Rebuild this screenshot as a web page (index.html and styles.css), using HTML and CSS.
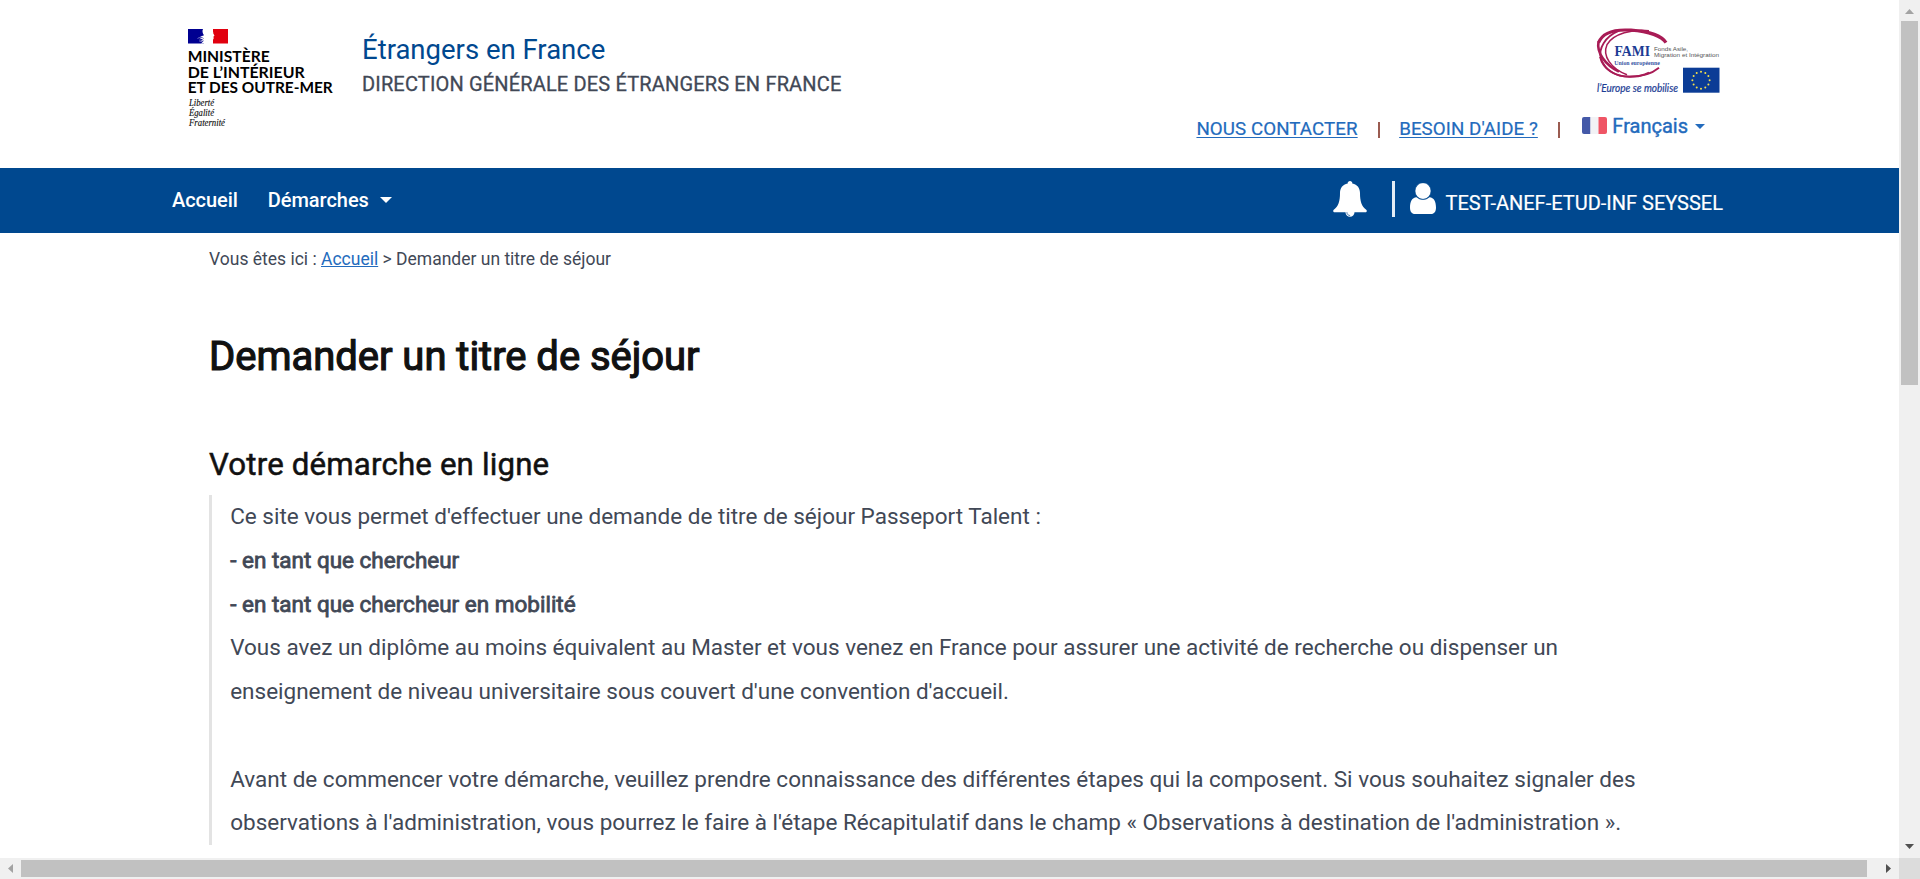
FILE: index.html
```
<!DOCTYPE html>
<html lang="fr">
<head>
<meta charset="utf-8">
<title>Étrangers en France - Demander un titre de séjour</title>
<link rel="stylesheet" href="styles.css">
</head>
<body>
<div class="window">
  <div class="page">
    <header class="header">
      <svg class="ministry" width="150" height="104" viewBox="0 0 150 104" role="img" aria-label="Ministère de l'Intérieur et des Outre-Mer">
        <rect x="0" y="1" width="16" height="14.5" fill="#000091"/>
        <rect x="25" y="1" width="15" height="14.5" fill="#e1000f"/>
        <path d="M15 1h8.500c1.200 1 1.800 2.500 1.800 4.500l1.200 2.300-1 .7.200 2-1 1.700-2.500.3-.5 3H13l3-3-4 1.500 3-3-4 .2 4-2-3-.4 4-1.500C14.500 5 14 3 15 1z" fill="#fff"/>
        <path d="M9.500 10.500c2-1.600 4.500-1.200 6.500.2M11 13c2-.2 3 .3 4.500-.6" fill="none" stroke="#8b8bc8" stroke-width=".8"/>
        <g class="ministry-name">
          <text x="-.3" y="33.800" textLength="82" lengthAdjust="spacingAndGlyphs">MINISTÈRE</text>
          <text x="-.3" y="49.600" textLength="117" lengthAdjust="spacingAndGlyphs">DE L’INTÉRIEUR</text>
          <text x="-.3" y="65" textLength="145" lengthAdjust="spacingAndGlyphs">ET DES OUTRE-MER</text>
        </g>
        <g class="motto">
          <text x="1" y="78.300" textLength="25" lengthAdjust="spacingAndGlyphs">Liberté</text>
          <text x="1" y="88.300" textLength="25" lengthAdjust="spacingAndGlyphs">Égalité</text>
          <text x="1" y="98" textLength="36" lengthAdjust="spacingAndGlyphs">Fraternité</text>
        </g>
      </svg>
      <div class="brand">
        <div class="brand-title">Étrangers en France</div>
        <div class="brand-sub">DIRECTION GÉNÉRALE DES ÉTRANGERS EN FRANCE</div>
      </div>
      <div class="header-side">
        <svg class="fami" width="126" height="70" viewBox="0 -.7 126 70" role="img" aria-label="FAMI">
          <g fill="none" stroke="#a81b55">
            <path d="M1.500 14C6 3 20 .5 34 1.500c18 1.200 31 6 35 12.500" stroke-width="3.200"/>
            <path d="M1.500 13C-.5 24 8 36 22 43" stroke-width="2.600"/>
            <path d="M22 2C8 8 1 20 4 30c4 12 16 18 28 18 13 0 24-4 30-9" stroke-width="1.800"/>
            <path d="M52 2C36 0 16 5 10 16c-5 11 4 24 20 30" stroke-width="1.500"/>
            <path d="M3 28c3 12 14 20 30 20 8 0 14-1.500 19-4" stroke-width="1.900"/>
          </g>
          <text class="fami-name" x="17.500" y="27.700" textLength="35.500" lengthAdjust="spacingAndGlyphs">FAMI</text>
          <text class="fami-union" x="17.300" y="36.800" textLength="45.500" lengthAdjust="spacingAndGlyphs">Union européenne</text>
          <text class="fami-fund" x="57" y="22" textLength="34" lengthAdjust="spacingAndGlyphs">Fonds Asile,</text>
          <text class="fami-fund" x="57" y="28.300" textLength="65" lengthAdjust="spacingAndGlyphs">Migration et Intégration</text>
          <text class="fami-slogan" x="0" y="63" textLength="81" lengthAdjust="spacingAndGlyphs">l’Europe se mobilise</text>
          <rect x="86" y="39" width="36.500" height="25" fill="#0b3c96"/>
          <g fill="#f5e04a">
            <circle cx="104" cy="43" r="1"/><circle cx="108.300" cy="44.200" r="1"/><circle cx="111.400" cy="47.300" r="1"/><circle cx="112.600" cy="51.500" r="1"/><circle cx="111.400" cy="55.700" r="1"/><circle cx="108.300" cy="58.800" r="1"/><circle cx="104" cy="60" r="1"/><circle cx="99.700" cy="58.800" r="1"/><circle cx="96.600" cy="55.700" r="1"/><circle cx="95.400" cy="51.500" r="1"/><circle cx="96.600" cy="47.300" r="1"/><circle cx="99.700" cy="44.200" r="1"/>
          </g>
        </svg>
        <div class="links">
          <a class="link">NOUS CONTACTER</a>
          <span class="bar"></span>
          <a class="link">BESOIN D'AIDE ?</a>
          <span class="bar"></span>
          <span class="lang">
            <svg width="25" height="17" viewBox="0 0 25 17"><path d="M2 0h6.500v17H2a2 2 0 0 1-2-2V2a2 2 0 0 1 2-2z" fill="#4459a8"/><path d="M8.500 0h8v17h-8z" fill="#f2f2f5"/><path d="M16.500 0H23a2 2 0 0 1 2 2v13a2 2 0 0 1-2 2h-6.500z" fill="#ef5565"/></svg>
            <span class="lang-name">Français</span>
            <svg class="lang-caret" width="10" height="5" viewBox="0 0 10 5"><path d="M0 0h10L5 5z" fill="#236bbd"/></svg>
          </span>
        </div>
      </div>
    </header>
    <nav class="nav">
      <a class="nav-item">Accueil</a>
      <a class="nav-item nav-menu">Démarches <svg width="12" height="6" viewBox="0 0 12 6"><path d="M0 0h12L6 6z" fill="#fff"/></svg></a>
      <div class="account">
        <svg class="bell" width="34" height="36" viewBox="0 0 34 36"><path d="M17 0c1.500 0 2.400 1 2.300 2.600C24.500 3.500 27 7.500 27 12c0 8 1.500 13.500 6.500 17 .7 1.200 0 2.200-1.200 2.200H21.500a4.500 4.500 0 0 1-9 0H1.700C.5 31.200-.2 30.200.5 29 5.500 25.500 7 20 7 12c0-4.500 2.500-8.500 7.700-9.400C14.600 1 15.500 0 17 0z" fill="#fff"/><path d="M13.900 31.200c0 2 1.300 3.300 3.200 3.300" fill="none" stroke="#00488f" stroke-width=".7"/></svg>
        <span class="divider"></span>
        <svg class="user" width="26" height="31" viewBox="0 0 26 31"><path d="M6.500 14.200a9.300 9.300 0 0 0 13 0c4.500.3 6.500 4.300 6.500 10.300 0 4.300-1.700 6.500-5 6.500H5c-3.300 0-5-2.200-5-6.500 0-6 2-10 6.500-10.300z" fill="#fff"/><ellipse cx="13" cy="8" rx="8" ry="8.300" fill="#fff" stroke="#00488f" stroke-width=".6"/></svg>
        <span class="user-name">TEST-ANEF-ETUD-INF SEYSSEL</span>
      </div>
    </nav>
    <main class="main">
      <div class="crumbs">Vous êtes ici : <a class="crumb-link">Accueil</a> &gt; Demander un titre de séjour</div>
      <h1 class="title">Demander un titre de séjour</h1>
      <h2 class="subtitle">Votre démarche en ligne</h2>
      <div class="intro">
        Ce site vous permet d'effectuer une demande de titre de séjour Passeport Talent :<br>
        <span class="strong">- en tant que chercheur</span><br>
        <span class="strong">- en tant que chercheur en mobilité</span><br>
        Vous avez un diplôme au moins équivalent au Master et vous venez en France pour assurer une activité de recherche ou dispenser un<br>
        enseignement de niveau universitaire sous couvert d'une convention d'accueil.<br>
        <br>
        Avant de commencer votre démarche, veuillez prendre connaissance des différentes étapes qui la composent. Si vous souhaitez signaler des<br>
        observations à l'administration, vous pourrez le faire à l'étape Récapitulatif dans le champ « Observations à destination de l'administration ».
      </div>
    </main>
  </div>
  <div class="vscroll">
    <svg class="arrow-up" width="9" height="5" viewBox="0 0 9 5"><path d="M4.500 0L9 5H0z" fill="#a3a3a3"/></svg>
    <div class="vthumb"></div>
    <svg class="arrow-down" width="9" height="5" viewBox="0 0 9 5"><path d="M0 0h9L4.500 5z" fill="#505050"/></svg>
  </div>
  <div class="hscroll">
    <svg class="arrow-left" width="5" height="9" viewBox="0 0 5 9"><path d="M5 0v9L0 4.500z" fill="#a3a3a3"/></svg>
    <div class="hthumb"></div>
    <svg class="arrow-right" width="5" height="9" viewBox="0 0 5 9"><path d="M0 0l5 4.500L0 9z" fill="#505050"/></svg>
  </div>
  <div class="corner"></div>
</div>
</body>
</html>
```
FILE: styles.css
```
* { box-sizing: border-box; }

body {
  margin: 0;
  overflow: hidden;
  background: #fff;
  color: #414856;
  font-family: Roboto, "Liberation Sans", sans-serif;
}

.window {
  display: grid;
  grid-template: 858px 21px / 1899px 21px;
}

.page { overflow: hidden; }

/* Header */
.header {
  display: flex;
  height: 168px;
  padding: 28px 179px 0 188px;
}

.ministry { flex: none; overflow: visible; }

.ministry-name {
  font: 700 14.700px Lato, sans-serif;
  fill: #000;
}

.motto { font: italic 9.500px "Liberation Serif", serif; fill: #111; stroke: #111; stroke-width: .15px; }

.brand { padding: 5px 0 0 24px; white-space: nowrap; }
.brand-title { font-size: 27.500px; line-height: 34px; color: #00488f; }
.brand-sub { margin-top: 3px; font-size: 20px; line-height: 28px; letter-spacing: .16px; -webkit-text-stroke: .3px #414856; }

.header-side {
  display: flex;
  flex: 1;
  flex-direction: column;
  align-items: flex-end;
}

.fami { flex: none; overflow: visible; margin-right: -3px; }
.fami-name { font: 700 14px "Liberation Serif", serif; fill: #1c3c94; }
.fami-union { font: 700 6.500px "Liberation Serif", serif; fill: #3a57a5; }
.fami-fund { font: 6px "Liberation Sans", sans-serif; fill: #555; }
.fami-slogan { font: italic 400 11px Lato, sans-serif; fill: #1c3c94; stroke: #1c3c94; stroke-width: .2px; }

.links {
  display: flex;
  height: 36px;
  padding-right: 15px;
  align-items: flex-start;
}

.link {
  margin-top: 19px;
  color: #236bbd;
  font-size: 18.750px;
  line-height: 24px;
  letter-spacing: .06px;
  text-decoration: underline;
  text-underline-offset: 2px;
  text-decoration-thickness: 1px;
  -webkit-text-stroke: .2px #236bbd;
}

.bar { width: 2px; height: 16px; margin: 24px 19px 0 20.500px; background: #9a5b50; }
.lang { display: flex; align-items: center; height: 24px; margin: 15px 0 0 3px; color: #236bbd; font-size: 20px; }
.lang-name { margin: 2px 7px 0 5px; -webkit-text-stroke: .4px #236bbd; }
.lang-caret { margin-top: 2px; }

/* Navigation */
.nav {
  display: flex;
  align-items: center;
  height: 65px;
  padding: 0 176px 2px 172px;
  background: #00488f;
  color: #fff;
  font-size: 20px;
  font-weight: 500;
}

.nav-item { letter-spacing: -.05px; }
.nav-menu { display: flex; align-items: center; gap: 11px; margin-left: 30px; }
.account { display: flex; flex: 1; height: 36px; justify-content: flex-end; margin-top: -2px; }
.divider { width: 3px; height: 36px; margin: 0 15px 0 25px; background: #e4edf6; }
.user { margin-top: 2px; }
.user-name { margin: 10px 0 0 10px; font-weight: 400; line-height: 24px; -webkit-text-stroke: .2px #fff; }

/* Content */
.main { padding: 14px 0 0 209px; }
.crumbs { font-size: 17.500px; line-height: 24px; }
.crumb-link { color: #236bbd; text-decoration: underline; }

.title {
  margin: 62px 0 0;
  color: #111;
  font-size: 40px;
  font-weight: 400;
  line-height: 48px;
  letter-spacing: -.03px;
  -webkit-text-stroke: 1.200px #111;
}

.subtitle {
  margin: 64px 0 0;
  color: #111;
  font-size: 31.250px;
  font-weight: 400;
  line-height: 40px;
  letter-spacing: .15px;
  -webkit-text-stroke: .5px #111;
}

.intro {
  height: 350px;
  margin-top: 10px;
  padding-left: 18.200px;
  border-left: 3px solid #e3e3e3;
  font-size: 22.500px;
  line-height: 43.750px;
  white-space: nowrap;
}

.strong { -webkit-text-stroke: .8px #414856; }

/* Scrollbars */
.vscroll {
  display: flex;
  flex-direction: column;
  align-items: center;
  background: #f0f0f0;
}

.arrow-up { flex: none; margin-top: 9px; }
.vthumb { flex: none; width: 17px; height: 364px; margin-top: 7px; background: #c1c1c1; }
.arrow-down { margin: auto 0 9px; }

.hscroll { display: flex; align-items: center; background: #f0f0f0; }
.arrow-left { flex: none; margin-left: 8px; }
.hthumb { flex: none; width: 1846px; height: 17px; margin-left: 8px; background: #c1c1c1; }
.arrow-right { margin: 0 8px 0 auto; }
.corner { background: #dcdcdc; }
```
